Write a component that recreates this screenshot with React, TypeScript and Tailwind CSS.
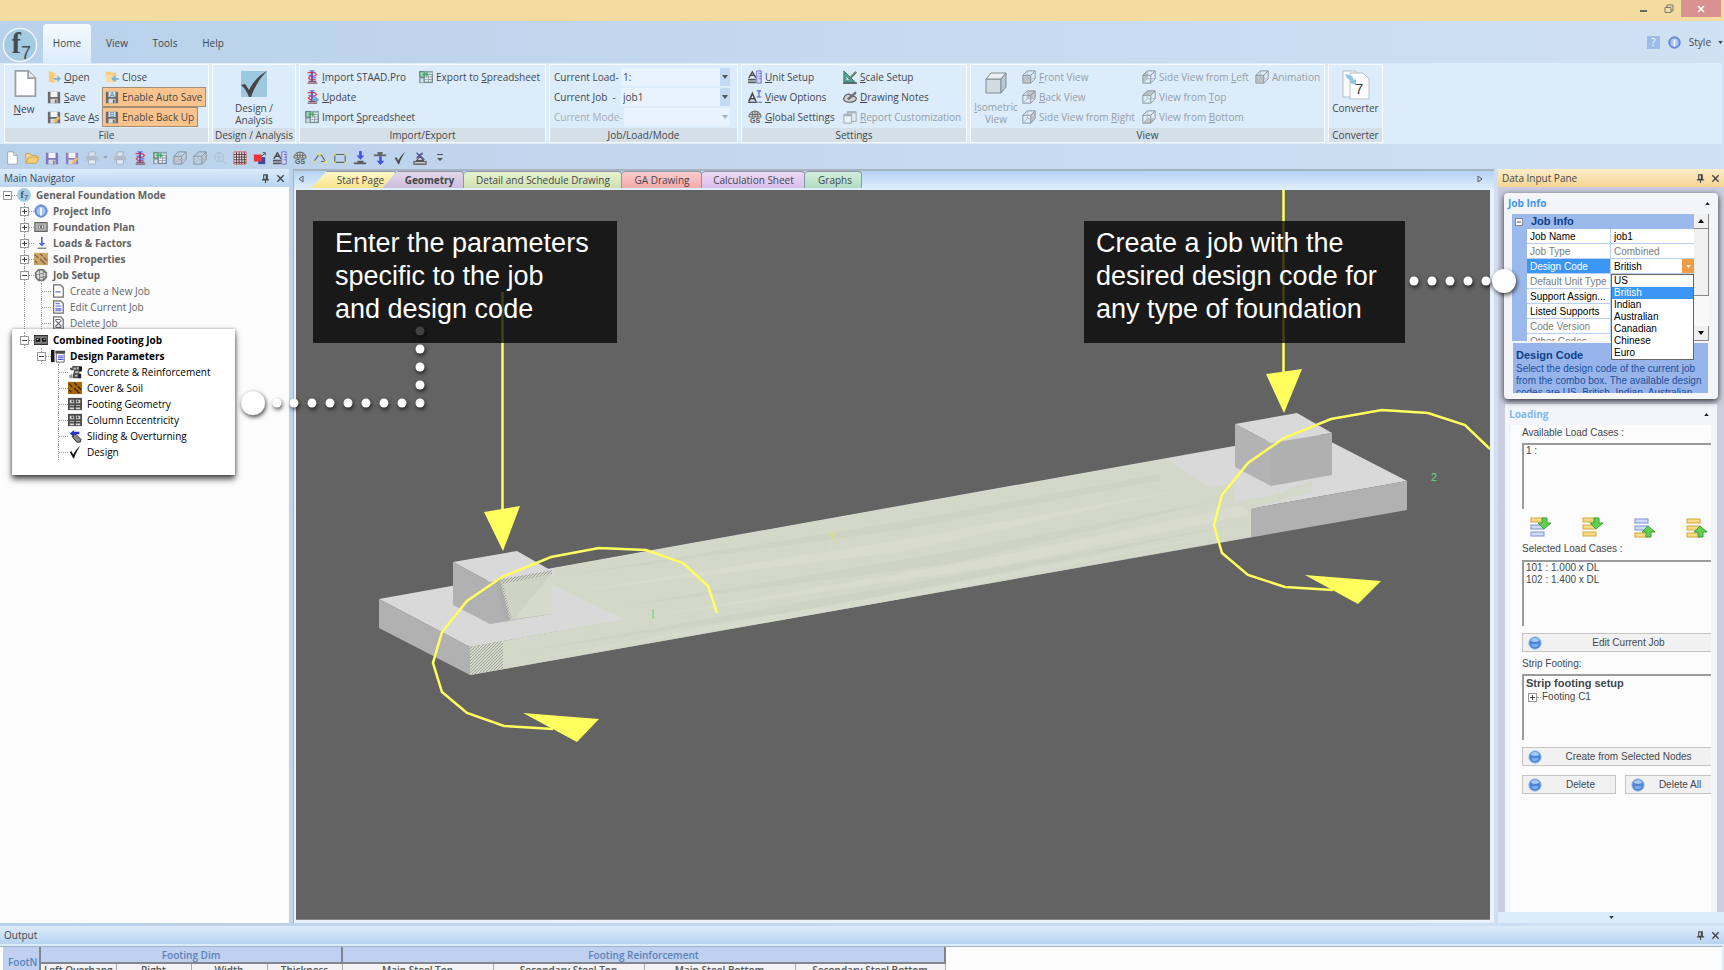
import React, { useState } from 'react';

/* ---------- small drawings ---------- */

type IconProps = { className?: string };

function Svg({ children, className = 'size-[14px]', box = 16 }: { children: React.ReactNode; className?: string; box?: number }) {
  return (
    <svg viewBox={`0 0 ${box} ${box}`} className={`shrink-0 ${className}`} fill="none" aria-hidden="true">
      {children}
    </svg>
  );
}

const PageIcon = ({ className }: IconProps) => (
  <Svg className={className}>
    <path d="M3 1h7l4 4v10H3z" fill="#fff" stroke="#9aa0a8" />
    <path d="M10 1v4h4" fill="#e8e8ec" stroke="#9aa0a8" />
  </Svg>
);

const FolderIcon = ({ className }: IconProps) => (
  <Svg className={className}>
    <path d="M1 14V3h5l1 2h6v3" fill="#f3dc98" stroke="#c6a04e" />
    <path d="M1 14l3-7h12l-3 7z" fill="#f8cf74" stroke="#c6a04e" />
  </Svg>
);

const OpenIcon = ({ className }: IconProps) => (
  <Svg className={className}>
    <path d="M2 1l6 2v12l-6-2z" fill="#f6c978" />
    <path d="M8 3h3v11H8z" fill="#f9dca4" />
    <path d="M8 9h4V6l4 4-4 4v-3H8z" fill="#7bb3dd" />
  </Svg>
);

const CloseIcon = ({ className }: IconProps) => (
  <Svg className={className}>
    <path d="M1 2h5l1 1h6v10H1z" fill="#f6c978" />
    <path d="M1 13V5h8v10z" fill="#f9dca4" />
    <path d="M16 9h-4V6l-5 4 5 4v-3h4z" fill="#7bb3dd" />
  </Svg>
);

function DiskIcon({ className, letter, tone = '#6b6b6b', pen }: IconProps & { letter?: string; tone?: string; pen?: boolean }) {
  return (
    <Svg className={className}>
      <path d="M1 2h13l1 1v12H1z" fill={tone} />
      <path d="M4 2h8v6H4z" fill={letter ? '#cfe6f2' : '#f2f4f6'} />
      <path d="M4 10h8v5H4z" fill="#d9d9d9" />
      <path d="M9 11h2v4H9z" fill={tone} />
      {letter && <text x="8" y="8" fontSize="8" textAnchor="middle" fill="#3c7fa6" fontFamily="Liberation Sans, sans-serif">{letter}</text>}
      {pen && <path d="M7 13l6-6 2 2-6 6z" fill="#f0bb62" />}
    </Svg>
  );
}

const StaadIcon = ({ className, update }: IconProps & { update?: boolean }) => (
  <Svg className={className}>
    <path d="M3 3h8l2 2-2 2H6L4 9l2 2h6" stroke="#e0404f" strokeWidth="1.5" />
    <path d="M8 1v12" stroke="#4d50c8" strokeWidth="2" />
    <path d="M5 1h6M4 6h3M9 9h4" stroke="#4d50c8" />
    <path d="M4 13h9M3 15h11" stroke="#80505c" strokeWidth="1.2" />
    {update && <path d="M8 10h4V7l4 4-4 4v-3H8z" fill="#6da6d6" />}
  </Svg>
);

const SheetIcon = ({ className }: IconProps) => (
  <Svg className={className}>
    <path d="M0 1h16v14H0z" fill="#8fa6b5" />
    <path d="M6 5h9v9H6z" fill="#eef5f7" stroke="#5d6f7c" />
    <path d="M6 3h9v2H6z" fill="#d5e2ea" />
    <path d="M7 8h8M7 11h8M11 6v8" stroke="#8a98a4" />
    <path d="M1 2h5v6H1z" fill="#a7dcb8" stroke="#4d7d68" />
    <path d="M2 10h3v4H2z" fill="#d5e0ea" />
    <path d="M4 4h4V2l3 3-3 3V6H4z" fill="#46a562" />
  </Svg>
);

function CubeIcon({ className, shade = 'front' }: IconProps & { shade?: string }) {
  const faces: Record<string, string> = {
    front: 'M1 6h9v9H1z',
    back: 'M6 1h9v9H6z',
    left: 'M1 6l5-5v9l-5 5z',
    right: 'M10 6l5-5v9l-5 5z',
    top: 'M1 6l5-5h9l-5 5z',
    bottom: 'M1 15l5-5h9l-5 5z',
  };
  return (
    <Svg className={className}>
      <path d={faces[shade]} fill="#c0c8cf" />
      <path d="M1 6h9v9H1zM1 6l5-5h9l-5 5M15 1v9l-5 5" stroke="#848d94" />
      <path d="M6 1v9h9M6 10l-5 5" stroke="#abb3ba" />
    </Svg>
  );
}

const UnitIcon = ({ className }: IconProps) => (
  <Svg className={className}>
    <path d="M10 1h5v14h-5z" fill="#dcdcfa" stroke="#6a63c9" />
    <path d="M12 4h3M12 7h3M12 10h3" stroke="#6a63c9" />
    <path d="M1 9l4-7 4 7M3 6h4" stroke="#4b4b4b" strokeWidth="1.5" />
    <path d="M0 10h9v2H0zM0 13h9v2H0z" fill="#5a5a5a" />
  </Svg>
);

const ViewOptIcon = ({ className }: IconProps) => (
  <Svg className={className}>
    <path d="M1 13l4-9 4 9M2 10h6" stroke="#4a4a4a" strokeWidth="1.8" />
    <path d="M0 14h11" stroke="#4a4a4a" strokeWidth="1.5" />
    <path d="M10 1h5M12.500 1v7M10 8h5M12 14h4" stroke="#5a63d0" strokeWidth="1.4" />
  </Svg>
);

const GlobalIcon = ({ className }: IconProps) => (
  <Svg className={className}>
    <path d="M1 8c0-9 14-9 14 0z" fill="#d0d2d4" stroke="#5e5e5e" />
    <path d="M8 1v7M5 2v6M11 2v6M2 5h12" stroke="#5e5e5e" />
    <text x="8" y="15" fontSize="8" fontWeight="bold" textAnchor="middle" fill="#555" fontFamily="Liberation Sans, sans-serif">GS</text>
  </Svg>
);

const ScaleIcon = ({ className }: IconProps) => (
  <Svg className={className}>
    <path d="M1 1v13h13z" fill="#4fa596" stroke="#376f66" />
    <path d="M4 8v3h3z" fill="#e6f4fb" />
    <path d="M6 10l8-9 2 2-8 8z" fill="#64836e" />
    <path d="M0 15h16" stroke="#444" strokeWidth="1.5" />
  </Svg>
);

const NotesIcon = ({ className }: IconProps) => (
  <Svg className={className}>
    <path d="M1 9c2-5 6-5 8-3s5 0 6 3-3 5-7 5-8-1-7-5z" fill="#d0d4d6" stroke="#555" strokeWidth="1.3" />
    <path d="M5 10l9-8 1 2-8 7z" fill="#777" stroke="#555" strokeWidth=".7" />
  </Svg>
);

const ReportIcon = ({ className }: IconProps) => (
  <Svg className={className}>
    <path d="M5 2h10v11H5z" fill="#e4ecf2" stroke="#95a0a8" />
    <path d="M1 5h9v10H1z" fill="#e9f1f7" stroke="#95a0a8" />
    <path d="M1 5h9v2H1zM5 2h10v2H5z" fill="#a7b3bc" />
  </Svg>
);

const CheckIcon = ({ className, color = '#4a4a4a' }: IconProps & { color?: string }) => (
  <Svg className={className}>
    <path d="M2 8l2-1 2 4c2-4 4-7 8-10-3 4-5 8-7 14H6z" fill={color} />
  </Svg>
);

const PrinterIcon = ({ className }: IconProps) => (
  <Svg className={className}>
    <path d="M5 1h7l-1 5H4z" fill="#dbe3ea" stroke="#a4b0bc" />
    <path d="M1 6h14v5H1z" fill="#b2bdc9" />
    <path d="M4 10h8v5H4z" fill="#e4eaf0" stroke="#a4b0bc" />
  </Svg>
);

const ZoomIcon = ({ className }: IconProps) => (
  <Svg className={className}>
    <circle cx="7" cy="7" r="5" stroke="#b4c2d0" strokeWidth="1.5" />
    <path d="M7 4v6M4 7h6M11 11l4 4" stroke="#b4c2d0" strokeWidth="1.5" />
  </Svg>
);

const GridIcon = ({ className }: IconProps) => (
  <Svg className={className}>
    <path d="M1 1h14v14H1z" fill="#f4e5e8" stroke="#e05560" />
    <path d="M4 1v14M7 1v14M10 1v14M13 1v14M1 4h14M1 7h14M1 10h14M1 13h14" stroke="#4a3438" />
  </Svg>
);

const RedBlockIcon = ({ className }: IconProps) => (
  <Svg className={className}>
    <path d="M6 7h8v8H6z" fill="#3e4a9a" />
    <path d="M1 4h9v8H1z" fill="#ee3338" />
    <path d="M10 6l4-4M11 2h3v3" stroke="#444" />
  </Svg>
);

const PolyIcon = ({ className }: IconProps) => (
  <Svg className={className}>
    <path d="M1 12l6-8 3 1 4 7H9" stroke="#5e6468" strokeWidth="1.3" />
    <path d="M0 11h3v3H0zM6 2h3v3H6zM13 11h3v3h-3z" fill="#e2e27a" />
  </Svg>
);

const RectIcon = ({ className }: IconProps) => (
  <Svg className={className}>
    <path d="M2 4h12v9H2z" stroke="#5e6468" strokeWidth="1.3" />
    <path d="M1 3h2v2H1zM13 3h2v2h-2zM1 12h2v2H1zM13 12h2v2h-2z" fill="#e8e03e" />
  </Svg>
);

const LoadDownIcon = ({ className }: IconProps) => (
  <Svg className={className}>
    <path d="M7 0h3v5h3l-4.500 5L4 5h3z" fill="#4553ee" />
    <path d="M5 11h7v2H5zM1 13h14v2H1z" fill="#5c5c5c" />
  </Svg>
);

const LoadUpDownIcon = ({ className }: IconProps) => (
  <Svg className={className}>
    <path d="M5 1h6v3H5zM1 4h14v2H1z" fill="#666" />
    <path d="M7 6h3v5h3l-4.500 5L4 11h3z" fill="#4553ee" />
  </Svg>
);

const DesignIcon = ({ className }: IconProps) => (
  <Svg className={className}>
    <path d="M1 15h14v-3H1zM4 11l4-5 4 5z" fill="#c8ccd4" stroke="#555" strokeWidth="1.2" />
    <path d="M4 2l9 8M11 2L4 8M5 4h6" stroke="#56509c" strokeWidth="1.4" />
  </Svg>
);

const InfoIcon = ({ className }: IconProps) => (
  <Svg className={className}>
    <circle cx="8" cy="8" r="7" fill="#6d95e6" stroke="#5575c4" />
    <circle cx="8" cy="8" r="5" fill="#a9c6f6" />
    <path d="M7 4h2v9H7z" fill="#fff" />
  </Svg>
);

const FoundationIcon = ({ className }: IconProps) => (
  <Svg className={className}>
    <path d="M1 3h14v10H1z" fill="#b5b5b5" stroke="#666" strokeWidth="1.4" />
    <path d="M5 6h6v4H5z" fill="#ddd" stroke="#777" />
    <path d="M7 8h2" stroke="#333" strokeWidth="1.5" />
  </Svg>
);

const LoadsIcon = ({ className }: IconProps) => (
  <Svg className={className}>
    <path d="M8 1h2v7h3l-4 4-4-4h3z" fill="#5a66dd" />
    <path d="M4 14h10" stroke="#777" strokeWidth="1.5" />
  </Svg>
);

const SoilIcon = ({ className, dark }: IconProps & { dark?: boolean }) => (
  <Svg className={className}>
    <path d="M0 1h16v14H0z" fill={dark ? '#a8690c' : '#cda66a'} />
    <path d="M1 3l4 4M7 8l6 6M7 2l3 3M11 6l4 4M1 10l3 3" stroke={dark ? '#3c2606' : '#7c6140'} strokeWidth="1.5" />
  </Svg>
);

const GearIcon = ({ className }: IconProps) => (
  <Svg className={className}>
    <path d="M5 1h6l4 4v6l-4 4H5l-4-4V5z" fill="#777" />
    <path d="M3 5l3-2v4H3zM7 3h3v3H7zM11 5l2 1v3h-2zM3 8h3v4H4zM7 7h3v3H7zM7 11h3v2H7zM11 10h2l-2 2z" fill="#e4e4e4" />
  </Svg>
);

const DocIcon = ({ className, kind }: IconProps & { kind: string }) => (
  <Svg className={className}>
    <path d="M3 1h8l3 3v11H3z" fill="#fff" stroke="#6f6f6f" strokeWidth="1.4" />
    {kind === 'new' && <path d="M5 9h6" stroke="#6b76d6" strokeWidth="1.5" />}
    {kind === 'edit' && <path d="M5 4h5M5 7h7M5 10h7M5 12h7" stroke="#7a85e0" strokeWidth="1.5" />}
    {kind === 'delete' && <path d="M5 5l7 7M12 5l-7 7M5 4h6M5 13h7" stroke="#6b6b78" strokeWidth="1.3" />}
  </Svg>
);

const CombinedIcon = ({ className }: IconProps) => (
  <Svg className={className}>
    <path d="M0 3h16v10H0z" fill="#808080" stroke="#333" strokeWidth="1.5" />
    <path d="M2 6h5v4H2zM9 6h5v4H9z" fill="#111" />
    <path d="M3 7h2v1H3zM11 7h2v1h-2z" fill="#ddd" />
  </Svg>
);

const ParamsIcon = ({ className }: IconProps) => (
  <Svg className={className}>
    <path d="M0 1h4v14H0z" fill="#1d1622" />
    <path d="M5 2h11v3H5z" fill="#444" />
    <path d="M6 5h9v10H6z" fill="#fff" stroke="#555" />
    <path d="M8 8h6M8 10h6M8 12h6" stroke="#4450dd" strokeWidth="1.3" />
  </Svg>
);

const RebarIcon = ({ className }: IconProps) => (
  <Svg className={className}>
    <path d="M2 3h3V1h10v6l-2 1v7H5l1-5 1-4H3z" fill="#4e4e4e" />
    <path d="M6 3h3v2H6zM10 2h2v3h-2zM8 7h4v2H8zM8 11h3v2H8z" fill="#b9b9b9" />
    <path d="M1 12l4-2v5H2z" fill="#999" />
    <path d="M13 2h3v5h-3zM12 10h3v5h-3z" fill="#1c1c1c" />
  </Svg>
);

const GeometryIcon = ({ className }: IconProps) => (
  <Svg className={className}>
    <path d="M0 1h16v14H0z" fill="#4a4a4a" />
    <path d="M2 3h5v4H2zM9 3h5v4H9zM2 9h5v1H2zM9 9h5v1H9zM2 12h5v2H2zM9 12h5v2H9z" fill="#d6d6d6" />
    <path d="M4 4h2v2H4zM10 4h2v2h-2z" fill="#222" />
  </Svg>
);

const SlidingIcon = ({ className }: IconProps) => (
  <Svg className={className}>
    <path d="M6 7l3-1 6 6-1 3h-4L5 9z" fill="#8a8a8a" stroke="#222" />
    <path d="M2 5l5-4v2h6v3H7v3z" fill="#2233cc" />
  </Svg>
);

const F7Icon = ({ className }: IconProps) => (
  <Svg className={className}>
    <circle cx="8" cy="8" r="8" fill="#a4cde3" />
    <text x="4" y="11" fontSize="11" fontWeight="bold" fill="#3f4a50" fontFamily="Liberation Serif, serif">f</text>
    <text x="8" y="14" fontSize="9" fill="#3f4a50" fontFamily="Liberation Sans, sans-serif">7</text>
  </Svg>
);

const PinIcon = () => (
  <Svg className="size-[9px]" box={10}>
    <path d="M3 1h4v5H3zM6 1v5M1 6.500h8M5 6v4" stroke="#444" strokeWidth="1.2" />
  </Svg>
);

const XIcon = () => (
  <Svg className="size-[9px]" box={10}>
    <path d="M1.500 1.500l7 7M8.500 1.500l-7 7" stroke="#444" strokeWidth="1.5" />
  </Svg>
);

const BallIcon = () => (
  <Svg className="size-[14px]">
    <circle cx="8" cy="8" r="7" fill="#4d86d8" stroke="#8fb1e2" />
    <path d="M3 5a6 6 0 0110 0c-2 2-8 2-10 0z" fill="#a9cdf8" />
    <path d="M4 9h8c0 5-8 5-8 0z" fill="#79acee" />
  </Svg>
);

function MoveIcon({ up, blue }: { up?: boolean; blue?: boolean[] }) {
  const fill = (i: number) => (blue?.[i] ? '#cfdcfa' : '#fbdc84');
  const line = (i: number) => (blue?.[i] ? '#7c93cf' : '#d3a53c');
  return (
    <Svg className="size-[21px]" box={21}>
      {[1, 8, 15].map((y, i) => (
        <rect key={y} x={1} y={y + (up ? 1 : 0)} width={13} height={4} fill={fill(i)} stroke={line(i)} />
      ))}
      {up ? (
        <path d="M14 9l7 6h-4v5h-5v-5H8z" fill="#62cf52" stroke="#38a13a" />
      ) : (
        <path d="M12 1h5v5h4l-7 6-6-6h4z" fill="#62cf52" stroke="#38a13a" />
      )}
    </Svg>
  );
}

/* ---------- ribbon ---------- */

// "&" marks the access key, which is underlined
function Mnemonic({ text }: { text: string }) {
  const at = text.indexOf('&');
  if (at < 0) return <>{text}</>;
  return (
    <>
      {text.slice(0, at)}
      <u>{text[at + 1]}</u>
      {text.slice(at + 2)}
    </>
  );
}

function RibbonButton({ icon, label, disabled, active }: { icon: React.ReactNode; label: string; disabled?: boolean; active?: boolean }) {
  return (
    <button
      disabled={disabled}
      className={`flex h-5 items-center gap-[3px] whitespace-nowrap ${disabled ? 'text-[#959ea6]' : ''} ${
        active ? 'border border-[#a28d76] bg-[#fbc48c] pl-[2px] pr-[3px]' : ''
      }`}
    >
      {icon}
      <span><Mnemonic text={label} /></span>
    </button>
  );
}

function RibbonGroup({ title, className, children }: { title: string; className: string; children: React.ReactNode }) {
  return (
    <section className={`flex h-[79px] shrink-0 flex-col border border-white/80 ${className}`}>
      <div className="flex flex-1 pt-[2px]">{children}</div>
      <h2 className="h-[14px] bg-[#d5dfe7] text-center leading-[14px] whitespace-nowrap">{title}</h2>
    </section>
  );
}

function RibbonSelect({ label, id, options, disabled, width }: { label: string; id: string; options: string[]; disabled?: boolean; width: string }) {
  return (
    <div className={`flex h-5 items-center ${disabled ? 'text-[#a5aeb6]' : ''}`}>
      <label htmlFor={id} className="whitespace-pre">{label}</label>
      <div className={`relative ml-auto h-[18px] bg-[#e9f3fd] ${width}`}>
        <select id={id} disabled={disabled} className="size-full appearance-none pl-[2px] leading-[18px] outline-none">
          {options.map(o => <option key={o}>{o}</option>)}
        </select>
        <span className={`pointer-events-none absolute top-0 right-0 flex h-[18px] w-[10px] items-center justify-center ${disabled ? '' : 'bg-[#c3daf2]'}`}>
          <svg viewBox="0 0 6 4" className="h-[4px] w-[6px]"><path d="M0 0h6L3 4z" fill={disabled ? '#a5aeb6' : '#555'} /></svg>
        </span>
      </div>
    </div>
  );
}

function Ribbon() {
  const [tab, setTab] = useState('Home');
  return (
    <header>
      <div className="flex h-[21px] items-start justify-end bg-[#f4dca1]">
        <button aria-label="Minimize" className="flex h-[17px] w-6 items-center justify-center">
          <svg viewBox="0 0 8 8" className="size-2"><path d="M0 5h7v2H0z" fill="#666" /></svg>
        </button>
        <button aria-label="Restore" className="flex h-[17px] w-[25px] items-center justify-center">
          <svg viewBox="0 0 10 10" className="size-[10px]" fill="none" stroke="#777"><path d="M1 3.500h6v5H1zM3 3V1h6v6H7" /></svg>
        </button>
        <button aria-label="Close" className="mr-[3px] flex h-[17px] w-10 items-center justify-center bg-[#d99191]">
          <svg viewBox="0 0 8 8" className="size-2" stroke="#fff" strokeWidth="1.6"><path d="M1 1l6 6M7 1L1 7" /></svg>
        </button>
      </div>

      <div className="flex h-[42px] overflow-hidden pt-[3px] pl-[2px]">
        <svg viewBox="0 0 38 38" className="mt-[3px] size-[36px] shrink-0">
          <circle cx="19" cy="19" r="17.500" fill="#a3cbe2" stroke="#eef6fb" strokeWidth="1.5" />
          <text x="10" y="27" fontSize="30" fontWeight="bold" fill="#454b50" fontFamily="Liberation Serif, serif">f</text>
          <text x="20" y="34" fontSize="19" fill="#454b50" fontFamily="Liberation Sans, sans-serif">7</text>
        </svg>
        <nav className="ml-[5px] flex">
          {['Home', 'View', 'Tools', 'Help'].map(name => (
            <button
              key={name}
              onClick={() => setTab(name)}
              className={`w-12 rounded-t-sm ${tab === name ? 'mr-[2px] bg-gradient-to-b from-[#f5fafe] to-[#dcecfb]' : ''}`}
            >
              {name}
            </button>
          ))}
        </nav>
        <div className="mb-[3px] ml-auto flex items-center">
          <button aria-label="Help" className="mr-2 size-[13px] bg-[#9dbce8] text-[10px] leading-[13px] text-white">?</button>
          <InfoIcon className="mr-2 size-[13px]" />
          <button className="flex items-center gap-[7px] pr-px">
            Style
            <svg viewBox="0 0 6 4" className="h-[3px] w-[5px]"><path d="M0 0h6L3 4z" fill="#444" /></svg>
          </button>
        </div>
      </div>

      <div className="mr-[2px] flex h-[81px] gap-[3px] bg-[#dcecfb] pt-px pl-1">
        <RibbonGroup title="File" className="w-[205px]">
          <button className="flex w-[38px] shrink-0 flex-col items-center pt-[2px]">
            <PageIcon className="size-[29px]" />
            <span className="mt-[3px] leading-4"><Mnemonic text="&New" /></span>
          </button>
          <div className="ml-1 w-[55px] shrink-0">
            <RibbonButton icon={<OpenIcon />} label="&Open" />
            <RibbonButton icon={<DiskIcon />} label="&Save" />
            <RibbonButton icon={<DiskIcon pen />} label="Save &As" />
          </div>
          <div className="flex flex-col items-start">
            <span className="pl-[3px]"><RibbonButton icon={<CloseIcon />} label="Close" /></span>
            <RibbonButton icon={<DiskIcon letter="A" />} label="Enable Auto Save" active />
            <RibbonButton icon={<DiskIcon letter="B" />} label="Enable Back Up" active />
          </div>
        </RibbonGroup>

        <RibbonGroup title="Design / Analysis" className="w-[84px]">
          <button className="flex w-full flex-col items-center pt-[3px]">
            <svg viewBox="0 0 28 28" className="size-7">
              <path d="M1 1h26v26H1z" fill="#9cc8e0" />
              <path d="M1 15l4-1 4 6C13 12 19 5 27 1c-7 7-12 15-16 26H9C7 22 5 18 1 15z" fill="#454545" />
            </svg>
            <span className="mt-1 leading-3">Design /<br />Analysis</span>
          </button>
        </RibbonGroup>

        <RibbonGroup title="Import/Export" className="w-[247px]">
          <div className="ml-[5px] w-[114px] shrink-0">
            <RibbonButton icon={<StaadIcon />} label="&Import STAAD.Pro" />
            <RibbonButton icon={<StaadIcon update />} label="&Update" />
            <RibbonButton icon={<SheetIcon />} label="Import &Spreadsheet" />
          </div>
          <div>
            <RibbonButton icon={<SheetIcon />} label="Export to &Spreadsheet" />
          </div>
        </RibbonGroup>

        <RibbonGroup title="Job/Load/Mode" className="w-[189px]">
          <div className="ml-1 w-[176px]">
            <RibbonSelect id="load" label="Current Load-" options={['1:']} width="w-[109px]" />
            <RibbonSelect id="job" label="Current Job  -" options={['job1']} width="w-[109px]" />
            <RibbonSelect id="mode" label="Current Mode-" options={[]} width="w-[106px]" disabled />
          </div>
        </RibbonGroup>

        <RibbonGroup title="Settings" className="w-[226px]">
          <div className="ml-[6px] w-[95px] shrink-0">
            <RibbonButton icon={<UnitIcon />} label="&Unit Setup" />
            <RibbonButton icon={<ViewOptIcon />} label="&View Options" />
            <RibbonButton icon={<GlobalIcon />} label="&Global Settings" />
          </div>
          <div>
            <RibbonButton icon={<ScaleIcon />} label="&Scale Setup" />
            <RibbonButton icon={<NotesIcon />} label="&Drawing Notes" />
            <RibbonButton icon={<ReportIcon />} label="&Report Customization" disabled />
          </div>
        </RibbonGroup>

        <RibbonGroup title="View" className="w-[355px]">
          <button disabled className="flex w-[50px] shrink-0 flex-col items-center pt-1 text-[#959ea6]">
            <svg viewBox="0 0 24 24" className="size-6" stroke="#838c94" strokeLinejoin="round">
              <path d="M2 8h15v14H2z" fill="#d2dbe2" />
              <path d="M2 8l5-6h15l-5 6z" fill="#eaf0f5" />
              <path d="M22 2v14l-5 6V8z" fill="#bcc6ce" />
            </svg>
            <span className="mt-[6px] leading-3"><Mnemonic text="&Isometric" /><br />View</span>
          </button>
          <div className="ml-px w-[120px] shrink-0">
            <RibbonButton icon={<CubeIcon shade="front" />} label="&Front View" disabled />
            <RibbonButton icon={<CubeIcon shade="back" />} label="&Back View" disabled />
            <RibbonButton icon={<CubeIcon shade="right" />} label="Side View from &Right" disabled />
          </div>
          <div className="w-[113px] shrink-0">
            <RibbonButton icon={<CubeIcon shade="left" />} label="Side View from &Left" disabled />
            <RibbonButton icon={<CubeIcon shade="top" />} label="View from &Top" disabled />
            <RibbonButton icon={<CubeIcon shade="bottom" />} label="View from &Bottom" disabled />
          </div>
          <div>
            <RibbonButton icon={<CubeIcon shade="front" />} label="Animation" disabled />
          </div>
        </RibbonGroup>

        <RibbonGroup title="Converter" className="w-[55px]">
          <button className="flex w-full flex-col items-center pt-[3px]">
            <svg viewBox="0 0 28 30" className="h-[30px] w-7" stroke="#b9bfc6">
              <path d="M1 1h13v26H1z" fill="#fafafa" />
              <path d="M8 3h13l6 6v20H8z" fill="#fff" />
              <path d="M3 4l7 2 2 4 2-1v6l-6-2 1-2-4-3z" fill="#8fc5e2" stroke="none" />
              <text x="13" y="24" fontSize="15" fill="#3b3b3b" stroke="none" fontFamily="Liberation Sans, sans-serif">7</text>
            </svg>
            <span className="mt-[2px] leading-3">Converter</span>
          </button>
        </RibbonGroup>
      </div>

      <div className="flex h-[25px] items-center gap-[5px] pt-[2px] pl-1">
        {quickTools.map(([name, icon]) => (
          <button key={name} aria-label={name} className={`flex justify-center ${name === 'Print menu' ? 'w-[3px]' : 'w-[15px]'}`}>{icon}</button>
        ))}
      </div>
    </header>
  );
}

const quickTools: [string, React.ReactNode][] = [
  ['New', <PageIcon />],
  ['Open', <FolderIcon />],
  ['Save', <DiskIcon tone="#8078c0" />],
  ['Save as', <DiskIcon tone="#8d84c6" pen />],
  ['Print', <PrinterIcon />],
  ['Print menu', <svg viewBox="0 0 6 4" className="h-[3px] w-[5px] shrink-0"><path d="M0 0h6L3 4z" fill="#93a1b0" /></svg>],
  ['Preview', <PrinterIcon />],
  ['STAAD', <StaadIcon />],
  ['Spreadsheet', <SheetIcon />],
  ['Cube', <CubeIcon shade="front" />],
  ['Cube side', <CubeIcon shade="right" />],
  ['Zoom', <ZoomIcon />],
  ['Grid', <GridIcon />],
  ['Column', <RedBlockIcon />],
  ['Units', <UnitIcon />],
  ['Global settings', <GlobalIcon />],
  ['Polygon', <PolyIcon />],
  ['Rectangle', <RectIcon />],
  ['Load', <LoadDownIcon />],
  ['Reaction', <LoadUpDownIcon />],
  ['Check', <CheckIcon />],
  ['Design', <DesignIcon />],
  ['More', <svg viewBox="0 0 8 8" className="size-2"><path d="M1 0h6v1H1zM1 4h6L4 7z" fill="#555" /></svg>],
];

/* ---------- navigator ---------- */

function PaneHeader({ title, className }: { title: string; className: string }) {
  return (
    <div className={`flex shrink-0 items-center px-1 text-[10px] ${className}`}>
      <h2>{title}</h2>
      <button aria-label={`Pin ${title}`} className="mr-[6px] ml-auto"><PinIcon /></button>
      <button aria-label={`Close ${title}`}><XIcon /></button>
    </div>
  );
}

type Node = { level: number; label: string; icon: React.ReactNode; sign?: string; bold?: boolean; rails?: number[] };

const upperNodes: Node[] = [
  { level: 0, label: 'General Foundation Mode', icon: <F7Icon />, sign: '-', bold: true },
  { level: 1, label: 'Project Info', icon: <InfoIcon />, sign: '+', bold: true },
  { level: 1, label: 'Foundation Plan', icon: <FoundationIcon />, sign: '+', bold: true },
  { level: 1, label: 'Loads & Factors', icon: <LoadsIcon />, sign: '+', bold: true },
  { level: 1, label: 'Soil Properties', icon: <SoilIcon />, sign: '+', bold: true },
  { level: 1, label: 'Job Setup', icon: <GearIcon />, sign: '-', bold: true },
  { level: 2, label: 'Create a New Job', icon: <DocIcon kind="new" />, rails: [1] },
  { level: 2, label: 'Edit Current Job', icon: <DocIcon kind="edit" />, rails: [1] },
  { level: 2, label: 'Delete Job', icon: <DocIcon kind="delete" />, rails: [1] },
];

const jobNodes: Node[] = [
  { level: 1, label: 'Combined Footing Job', icon: <CombinedIcon />, sign: '-', bold: true },
  { level: 2, label: 'Design Parameters', icon: <ParamsIcon />, sign: '-', bold: true },
  { level: 3, label: 'Concrete & Reinforcement', icon: <RebarIcon /> },
  { level: 3, label: 'Cover & Soil', icon: <SoilIcon dark /> },
  { level: 3, label: 'Footing Geometry', icon: <GeometryIcon /> },
  { level: 3, label: 'Column Eccentricity', icon: <GeometryIcon /> },
  { level: 3, label: 'Sliding & Overturning', icon: <SlidingIcon /> },
  { level: 3, label: 'Design', icon: <CheckIcon color="#111" /> },
];

function TreeRow({ node }: { node: Node }) {
  return (
    <li className="flex h-4 items-center whitespace-nowrap">
      {Array.from({ length: node.level }, (_, i) => (
        <span key={i} className="flex h-full w-[17px] pl-[7px]">
          {node.rails?.includes(i) && <span className="border-l border-dotted border-[#999]" />}
        </span>
      ))}
      <span className="relative flex h-full w-[17px] shrink-0 items-center pl-[3px]">
        {node.level > 0 && <span className="absolute inset-y-0 left-[7px] border-l border-dotted border-[#999]" />}
        <span className="absolute right-0 left-2 border-t border-dotted border-[#999]" />
        {node.sign && (
          <button aria-label={`Toggle ${node.label}`} className="relative size-[9px] border border-[#999] bg-white">
            <svg viewBox="0 0 7 7" className="size-[7px]" stroke="#444">
              <path d={node.sign === '+' ? 'M1 3.500h5M3.500 1v5' : 'M1 3.500h5'} />
            </svg>
          </button>
        )}
      </span>
      {node.icon}
      <span className={`ml-[5px] ${node.bold ? 'font-bold' : ''}`}>{node.label}</span>
    </li>
  );
}

function Navigator() {
  return (
    <aside className="flex w-[289px] shrink-0 flex-col bg-[#fcfcfd]">
      <PaneHeader title="Main Navigator" className="h-[18px] bg-gradient-to-b from-[#dbebfb] to-[#b8d5f3]" />
      <ul className="text-[#636363]">
        {upperNodes.map(n => <TreeRow key={n.label} node={n} />)}
      </ul>
      <div className="relative -mt-[2px] ml-3 h-[146px] w-[223px] bg-white pt-[3px] text-black shadow-[0_4px_6px_rgba(0,0,0,0.7),0_0_3px_rgba(0,0,0,0.3)]">
        <ul className="-ml-3">
          {jobNodes.map(n => <TreeRow key={n.label} node={n} />)}
        </ul>
      </div>
    </aside>
  );
}

/* ---------- centre view ---------- */

const tabs = [
  { name: 'Start Page', style: 'w-[86px] pl-[14px] from-[#fdf8c8] to-[#f7e388] [clip-path:polygon(16px_0,100%_0,calc(100%-14px)_100%,0_100%)]' },
  { name: 'Geometry', style: '-ml-[15px] w-[82px] pl-[14px] font-bold from-[#e3d6ea] to-[#cdbfdc] [clip-path:polygon(16px_0,100%_0,100%_100%,0_100%)]' },
  { name: 'Detail and Schedule Drawing', style: 'w-[158px] pl-px from-[#e8f2d0] to-[#cfe0b0]' },
  { name: 'GA Drawing', style: 'w-[80px] pl-px from-[#fbcccc] to-[#f3aaaa]' },
  { name: 'Calculation Sheet', style: 'w-[103px] pl-px from-[#ecd9f5] to-[#d9bfea]' },
  { name: 'Graphs', style: 'w-[57px] pl-1 from-[#d3eedd] to-[#b0dcc2]' },
];

const beam = 'M555 568L1166 459L1212 488L1234 482L1235 501L1275 495L1312 480V492L1251 509V537L470 675V647L624 619L551 584Z';

function Model() {
  return (
    <svg viewBox="296 190 1194 729" preserveAspectRatio="xMinYMin slice" className="absolute inset-0 size-full">
      <defs>
        <pattern id="hatch" width="3" height="3" patternUnits="userSpaceOnUse">
          <path d="M0 3L3 0" stroke="#a2a49e" strokeWidth="1" />
        </pattern>
        <clipPath id="beam"><path d={beam} /></clipPath>
      </defs>
      {/* footing slab */}
      <path d="M379 599L1312 432L1407 481L470 647Z" fill="#d9d9d9" />
      <path d="M379 599L470 647V675L379 628Z" fill="#b1b1b1" />
      <path d="M470 647L1407 481V510L470 675Z" fill="#b1b1b1" />
      {/* strip beam */}
      <path d={beam} fill="#d4d8c8" />
      <g opacity=".4" clipPath="url(#beam)">
        <path d="M560 576L900 522L1160 474L1160 480L900 530Z" fill="#c8cdb9" />
        <path d="M570 592L900 540L1190 488L900 552Z" fill="#dfe2d5" />
        <path d="M620 606L950 552L1220 500L950 564Z" fill="#c9cebb" />
        <path d="M640 618L1000 556L1240 506L1251 514L1000 566Z" fill="#dfe2d5" />
        <path d="M520 652L860 592L1250 522L860 602Z" fill="#c9cebb" />
        <path d="M500 664L860 600L1240 530L860 608Z" fill="#dde1d2" />
      </g>
      <path d="M470 647L503 641V669L470 675Z" fill="url(#hatch)" />
      {/* left column */}
      <path d="M453 562L517 551L552 571L490 582Z" fill="#d9d9d9" />
      <path d="M453 562L490 582V624L453 605Z" fill="#b1b1b1" />
      <path d="M490 582L552 571V614L490 624Z" fill="#b1b1b1" />
      <path d="M500 581L552 571V614L510 620Z" fill="#cfd3c3" />
      <path d="M552 573V614L515 618Z" fill="#d6dacb" />
      <path d="M495 580L552 570V574L503 584L512 619L506 621Z" fill="url(#hatch)" />
      {/* right column */}
      <path d="M1235 424L1297 413L1332 433L1271 443Z" fill="#d9d9d9" />
      <path d="M1235 424L1271 443V486L1235 467Z" fill="#b3b3b3" />
      <path d="M1271 443L1332 433V475L1271 486Z" fill="#b0b0b0" />
      {/* loads */}
      <g stroke="#ffff5e" strokeWidth="2.500" fill="none">
        <path d="M502.500 292V520M1283.500 190V380" />
        <path d="M717 613L708 586L683 563L646 550L599 548L551 557L502 577L467 601L442 632L433 663L442 692L467 713L504 726L553 729" />
        <path d="M1490 449L1465 425L1428 413L1382 410L1331 419L1284 438L1248 463L1222 495L1214 525L1222 553L1248 575L1285 587L1333 590" />
      </g>
      <g fill="#ffff5e">
        <path d="M484 512L520 506L503 551Z" />
        <path d="M1266 374L1302 369L1284 413Z" />
        <path d="M523 713L599 719L577 742Z" />
        <path d="M1305 575L1381 581L1358 604Z" />
      </g>
      <path d="M829 532L832 536L835 532M832 536V540M829.500 542V549" stroke="#ecec4e" fill="none" />
      <path d="M653 609V619" stroke="#7ede84" strokeWidth="1.5" />
      <text x="1431" y="481" fontSize="11" fill="#5fdc7c" fontFamily="Liberation Sans, sans-serif">2</text>
    </svg>
  );
}

function CenterView() {
  const [active, setActive] = useState('Geometry');
  return (
    <main className="mx-1 flex min-w-0 flex-1 flex-col border-t-2 border-l border-[#a9b3bd] bg-[#e9f1fa]">
      <div className="flex h-[19px] shrink-0 items-center bg-gradient-to-b from-[#b5d3f4] to-[#e2effc]">
        <button aria-label="Scroll left" className="mb-1 flex w-[17px] items-center justify-start pl-1">
          <svg viewBox="0 0 6 8" className="h-2 w-[6px]" fill="none" stroke="#556"><path d="M5 1v6L1 4z" /></svg>
        </button>
        {tabs.map(t => (
          <button
            key={t.name}
            onClick={() => setActive(t.name)}
            aria-current={active === t.name}
            className={`h-[17px] shrink-0 self-start rounded-t-sm border-t border-r border-[#8c96aa] bg-gradient-to-b whitespace-nowrap ${t.style}`}
          >
            {t.name}
          </button>
        ))}
        <button aria-label="Scroll right" className="mr-[11px] mb-1 ml-auto">
          <svg viewBox="0 0 6 8" className="h-2 w-[6px]" fill="none" stroke="#556"><path d="M1 1v6l4-3z" /></svg>
        </button>
      </div>
      <div className="relative mr-1 mb-[3px] ml-[2px] flex-1 overflow-hidden border-b border-[#888] bg-[#636363]">
        <Model />
        <p className="absolute top-[31px] left-[17px] h-[122px] w-[304px] bg-black/75 pt-[6px] pl-[22px] font-['Liberation_Sans',sans-serif] text-[27px] leading-[33px] text-white">
          Enter the parameters<br />specific to the job<br />and design code
        </p>
        <p className="absolute top-[31px] right-[85px] h-[122px] w-[321px] bg-black/75 pt-[6px] pl-3 font-['Liberation_Sans',sans-serif] text-[27px] leading-[33px] text-white">
          Create a job with the<br />desired design code for<br />any type of foundation
        </p>
      </div>
    </main>
  );
}

/* ---------- data input pane ---------- */

const codes = ['US', 'British', 'Indian', 'Australian', 'Canadian', 'Chinese', 'Euro'];

const properties = [
  { name: 'Job Name', value: 'job1' },
  { name: 'Job Type', value: 'Combined', dim: true },
  { name: 'Design Code', value: 'British', selected: true },
  { name: 'Default Unit Type', value: '', dim: true },
  { name: 'Support Assign...', value: '' },
  { name: 'Listed Supports', value: '' },
  { name: 'Code Version', value: '', dim: true },
  { name: 'Other Codes', value: '', dim: true },
];

function CardTitle({ children, className }: { children: string; className: string }) {
  return (
    <h3 className={`flex h-[21px] items-center justify-between pr-2 pl-1 font-['Open_Sans','Noto_Sans',sans-serif] text-[10px] font-bold ${className}`}>
      {children}
      <svg viewBox="0 0 6 4" className="h-[3px] w-[5px]"><path d="M0 4h6L3 0z" fill="#222" /></svg>
    </h3>
  );
}

function JobInfoCard() {
  const [code, setCode] = useState('British');
  return (
    <section className="relative mx-[6px] h-[206px] shrink-0 rounded-sm bg-[#f4f5f9] shadow-[0_2px_6px_rgba(0,0,0,0.8)]">
      <CardTitle className="text-[#3f97ee]">Job Info</CardTitle>
      <div className="relative mr-[9px] ml-2 flex h-[127px] text-black">
        <div className="flex min-w-0 flex-1 flex-col overflow-hidden bg-[#9cb9ec]">
          <div className="flex h-[15px] shrink-0 items-center gap-2 pl-[3px] font-bold text-[#0c4088]">
            <button aria-label="Collapse Job Info" className="size-2 border border-[#889] bg-white"><svg viewBox="0 0 6 6" className="size-[6px]"><path d="M1 3h4" stroke="#444" /></svg></button>
            Job Info
          </div>
          {properties.map(p => (
            <div key={p.name} className="ml-[15px] flex h-[15px] shrink-0 border-b border-[#b9cef0]">
              <label
                htmlFor={p.name}
                className={`w-[84px] shrink-0 overflow-hidden border-r border-[#b9cef0] pl-[3px] text-[10px] leading-4 whitespace-nowrap ${
                  p.selected ? 'bg-[#3b96f6] text-white' : p.dim ? 'bg-white text-[#7d7d7d]' : 'bg-white'
                }`}
              >
                {p.name}
              </label>
              <input
                id={p.name}
                readOnly
                value={p.selected ? code : p.value}
                className={`min-w-0 flex-1 bg-white pt-px pl-[3px] text-[10px] leading-[14px] outline-none ${p.dim ? 'text-[#7d7d7d]' : ''}`}
              />
              {p.selected && (
                <button aria-label="Open design codes" className="flex w-3 items-center justify-center bg-[#ef9b45]">
                  <svg viewBox="0 0 6 4" className="h-[3px] w-[5px]"><path d="M0 0h6L3 4z" fill="#fff" /></svg>
                </button>
              )}
            </div>
          ))}
        </div>
        <div className="flex w-[15px] flex-col bg-[#f8f8f8]">
          <button aria-label="Scroll up" className="flex h-[15px] items-center justify-center border-r border-b border-[#888] bg-[#f0f0f0]">
            <svg viewBox="0 0 6 4" className="h-[4px] w-[6px]"><path d="M0 4h6L3 0z" fill="#000" /></svg>
          </button>
          <div className="h-[67px] border-r border-b border-[#888] bg-[#f0f0f0]" />
          <button aria-label="Scroll down" className="mt-auto flex h-[15px] items-center justify-center border-r border-b border-[#888] bg-[#f0f0f0]">
            <svg viewBox="0 0 6 4" className="h-[4px] w-[6px]"><path d="M0 0h6L3 4z" fill="#000" /></svg>
          </button>
        </div>
        <ul role="listbox" aria-label="Design codes" className="absolute top-[60px] left-[99px] z-10 w-[83px] border border-[#666] bg-white text-[10px] leading-3">
          {codes.map(c => (
            <li key={c} role="option" aria-selected={c === code} onClick={() => setCode(c)} className={`h-3 pl-[2px] ${c === code ? 'bg-[#3b96f6] text-white' : ''}`}>
              {c}
            </li>
          ))}
        </ul>
      </div>
      <div className="mt-[2px] mr-[10px] ml-[9px] h-[50px] overflow-hidden bg-[#97b5ea] px-[3px] pt-1 text-[10px] leading-3 text-[#1d4f9c]">
        <h4 className="text-[11px] leading-4 font-bold text-[#0c4088]">Design Code</h4>
        <p className="whitespace-nowrap">Select the design code of the current job<br />from the combo box. The available design<br />codes are US, British, Indian, Australian,</p>
      </div>
    </section>
  );
}

function ListBox({ id, items }: { id: string; items: string[] }) {
  return (
    <select id={id} size={5} className="block h-[66px] w-full appearance-none overflow-hidden border-t-2 border-l-2 border-[#9b9b9b] bg-[#fcfcfc] text-[10px] outline-none">
      {items.map(i => <option key={i} className="h-[11px] p-0 pl-[2px] leading-[11px]">{i}</option>)}
    </select>
  );
}

function PaneButton({ children }: { children: string }) {
  return (
    <button className="flex h-[19px] w-full items-center border border-r-0 border-[#c4c4c4] bg-[#f1f1f1] pl-[5px] text-[10px]">
      <BallIcon />
      <span className="flex-1 pl-1 text-center whitespace-nowrap">{children}</span>
    </button>
  );
}

function DataPane() {
  return (
    <aside className="flex w-[226px] shrink-0 flex-col bg-[#cccedf] font-['Liberation_Sans',sans-serif] text-[11px]">
      <PaneHeader title="Data Input Pane" className="h-[18px] bg-gradient-to-b from-[#fdeccb] to-[#f6d592] font-['Open_Sans','Noto_Sans',sans-serif]" />
      <div className="h-[6px] shrink-0" />
      <JobInfoCard />
      <section className="mx-[7px] mt-[5px] flex flex-1 flex-col bg-[#f4f5fa]">
        <CardTitle className="text-[#7fb9ec]">Loading</CardTitle>
        <div className="mx-[6px] flex-1 bg-[#fcfcfc] pt-px pl-[11px] text-[10px]">
          <label htmlFor="available" className="block h-[17px] leading-[14px]">Available Load Cases :</label>
          <ListBox id="available" items={['1 :']} />
          <div className="flex h-[33px] items-start justify-between pt-2 pr-1 pl-2">
            <button aria-label="Add load case"><MoveIcon blue={[false, true, true]} /></button>
            <button aria-label="Add all load cases"><MoveIcon /></button>
            <button aria-label="Remove load case"><MoveIcon up blue={[true, true, false]} /></button>
            <button aria-label="Remove all load cases"><MoveIcon up /></button>
          </div>
          <label htmlFor="selected" className="block h-[18px] leading-[14px]">Selected Load Cases :</label>
          <ListBox id="selected" items={['101 : 1.000 x DL', '102 : 1.400 x DL']} />
          <div className="pt-[7px]"><PaneButton>Edit Current Job</PaneButton></div>
          <p className="h-[22px] pt-1 leading-4">Strip Footing:</p>
          <div className="h-[66px] border-t-2 border-l-2 border-[#9b9b9b] bg-[#fcfcfc] pl-[2px]">
            <b className="block text-[11px] leading-[14px]">Strip footing setup</b>
            <div className="flex items-center leading-[14px]">
              <button aria-label="Expand Footing C1" className="ml-[2px] size-[9px] border border-[#999] bg-white">
                <svg viewBox="0 0 7 7" className="size-[7px]" stroke="#444"><path d="M1 3.500h5M3.500 1v5" /></svg>
              </button>
              <span className="mr-px w-1 border-t border-dotted border-[#999]" />
              Footing C1
            </div>
          </div>
          <div className="pt-[7px]"><PaneButton>Create from Selected Nodes</PaneButton></div>
          <div className="flex gap-[9px] pt-[9px]">
            <div className="w-[94px] border-r border-[#c4c4c4]"><PaneButton>Delete</PaneButton></div>
            <div className="flex-1"><PaneButton>Delete All</PaneButton></div>
          </div>
        </div>
      </section>
      <button aria-label="Scroll pane" className="flex h-[11px] shrink-0 items-center justify-center bg-[#dcecfb]">
        <svg viewBox="0 0 6 4" className="h-[3px] w-[5px]"><path d="M0 0h6L3 4z" fill="#333" /></svg>
      </button>
    </aside>
  );
}

/* ---------- output ---------- */

function Output() {
  const head = 'border-r-2 border-b-2 border-[#7f868e] bg-[#bfd0f0] font-semibold text-[#5b83b8]';
  const sub = 'border-r border-[#aaa] bg-[#f3f3f3] font-semibold text-[#555] align-top leading-3';
  return (
    <section className="mt-[3px] h-[44px] shrink-0 overflow-hidden bg-[#dcecfb]">
      <PaneHeader title="Output" className="h-[18px] bg-gradient-to-b from-[#dcebfb] to-[#b8d4f2]" />
      <div className="mt-[2px] mr-[2px] h-6 overflow-hidden border-t border-[#9db4c4] bg-[#fdfdfd] pl-[3px]">
        <table className="w-[942px] table-fixed border-collapse text-[10px]">
          <colgroup>
            <col className="w-[37px]" />
            <col className="w-[76px]" /><col className="w-[75px]" /><col className="w-[76px]" /><col className="w-[75px]" />
            <col className="w-[151px]" /><col className="w-[151px]" /><col className="w-[151px]" /><col className="w-[150px]" />
          </colgroup>
          <thead>
            <tr className="h-4">
              <th rowSpan={2} className={`p-0 pl-[5px] text-left ${head}`}>FootN</th>
              <th colSpan={4} className={`p-0 leading-[14px] ${head}`}>Footing Dim</th>
              <th colSpan={4} className={`p-0 leading-[14px] ${head}`}>Footing Reinforcement</th>
            </tr>
            <tr className="h-4">
              {['Left Overhang', 'Right', 'Width', 'Thickness', 'Main Steel Top', 'Secondary Steel Top', 'Main Steel Bottom', 'Secondary Steel Bottom'].map(c => (
                <th key={c} className={`p-0 whitespace-nowrap ${sub}`}>{c}</th>
              ))}
            </tr>
          </thead>
        </table>
      </div>
    </section>
  );
}

/* dotted leaders between the call-outs and the panels */
function Dots() {
  const left = [294, 312, 330, 348, 366, 384, 402, 420];
  return (
    <>
      <svg viewBox="236 320 200 105" className="pointer-events-none absolute top-[151px] left-[236px] h-[105px] w-[200px] drop-shadow-[1px_2px_2px_rgba(0,0,0,0.7)]">
        <circle cx="253" cy="403" r="12" fill="#fff" stroke="#ddd" strokeWidth=".5" />
        {[277, ...left].map(x => <circle key={x} cx={x} cy="403" r="4.500" fill="#fff" />)}
        {[385, 367, 349].map(y => <circle key={y} cx="420" cy={y} r="4.500" fill="#fff" />)}
        <circle cx="420" cy="331" r="4.500" fill="#414141" />
      </svg>
      <svg viewBox="1404 261 120 40" className="pointer-events-none absolute top-[92px] right-[200px] h-10 w-[120px] drop-shadow-[1px_2px_2px_rgba(0,0,0,0.7)]">
        {[1414, 1432, 1450, 1468, 1486].map(x => <circle key={x} cx={x} cy="281" r="4.500" fill="#fff" />)}
        <circle cx="1504" cy="281" r="12" fill="#fff" />
      </svg>
    </>
  );
}

export default function App() {
  return (
    <div className="flex h-screen flex-col overflow-hidden bg-gradient-to-r from-[#b9d1eb] to-[#d0e1f3] font-['Open_Sans','Noto_Sans',sans-serif] text-[10px] text-[#43474c]">
      <Ribbon />
      <div className="relative flex min-h-0 flex-1">
        <Navigator />
        <CenterView />
        <DataPane />
        <Dots />
      </div>
      <Output />
    </div>
  );
}
